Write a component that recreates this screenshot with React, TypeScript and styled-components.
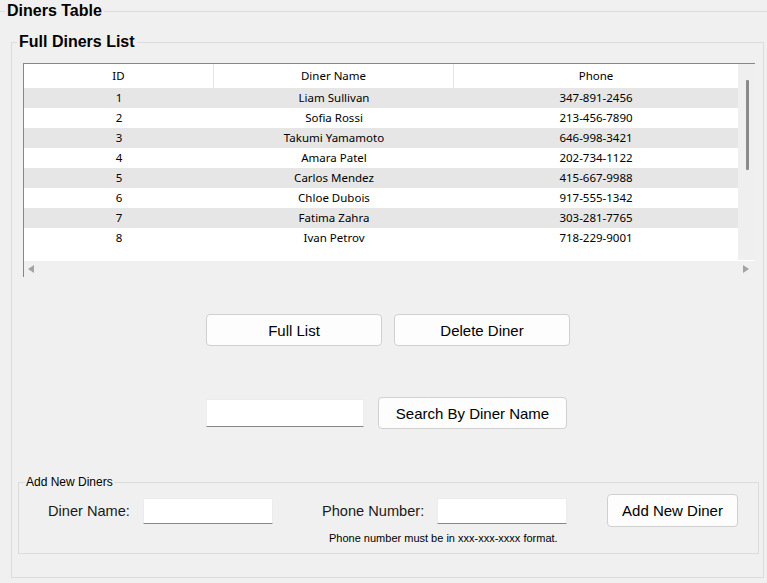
import React from "react";
import styled, { createGlobalStyle } from "styled-components";

const Global = createGlobalStyle`
  html, body { margin: 0; padding: 0; background: #f0f0f0; overflow: hidden; }
  body { font-family: "Liberation Sans", Arial, sans-serif; color: #000; }
  * { box-sizing: border-box; }
`;

const OuterGroup = styled.fieldset`
  margin: 2px 0 0 0;
  padding: 0 0 0 5px;
  border: none;
  border-top: 1px solid #dcdcdc;
  min-width: 0;
  width: 100%;
`;

const Title = styled.legend<{ $size: number; $bold?: boolean; $shift?: number }>`
  padding: 0 ${(p) => (p.$bold ? 2 : 1)}px;
  margin-left: ${(p) => p.$shift ?? 0}px;
  font-family: "Liberation Sans", Arial, sans-serif;
  font-size: ${(p) => p.$size}px;
  line-height: ${(p) => p.$size + 2}px;
  font-weight: ${(p) => (p.$bold ? 700 : 400)};
  color: #000;
`;

const ListGroup = styled.fieldset`
  margin: 13px 0 0 6px;
  padding: 12px 4px 23px 5px;
  border: 1px solid #dcdcdc;
  width: 753px;
  min-width: 0;
`;

const TableFrame = styled.div`
  margin-left: 6px;
  width: 732px;
  display: grid;
  grid-template-columns: 714px 17px;
  grid-template-rows: 196px 17px;
  border-top: 1px solid #828790;
  border-left: 1px solid #828790;
  background: #f0f0f0;
`;

const Viewport = styled.div`
  background: #ffffff;
  font-family: "Noto Sans", "Open Sans", sans-serif;
  font-size: 11.5px;
  color: #000;
`;

const HeaderRow = styled.div`
  display: grid;
  grid-template-columns: 190px 240px 284px;
  height: 24px;
`;

const HeaderCell = styled.div<{ $last?: boolean }>`
  display: flex;
  align-items: center;
  justify-content: center;
  padding-bottom: 2px;
  border-right: ${(p) => (p.$last ? "none" : "1px solid #e5e5e5")};
`;

const DataRow = styled.div<{ $shade: boolean }>`
  display: grid;
  grid-template-columns: 190px 240px 284px;
  height: 20px;
  background: ${(p) => (p.$shade ? "#e6e6e6" : "#ffffff")};
`;

const DataCell = styled.div`
  display: flex;
  align-items: center;
  justify-content: center;
  padding-bottom: 2px;
`;

const VScroll = styled.div`
  background: #efefef;
  display: flex;
  justify-content: flex-start;
  padding: 16px 0 0 8px;
`;

const VThumb = styled.div`
  width: 3px;
  height: 90px;
  background: #8a8a8a;
  border-radius: 1px;
`;

const HScroll = styled.div`
  grid-column: 1 / span 2;
  display: flex;
  align-items: center;
  justify-content: space-between;
  padding: 0 6px 0 4px;
  background: #f0f0f0;
  border-top: 1px solid #ffffff;
`;

const Arrow = styled.div<{ $dir: "left" | "right" }>`
  width: 0;
  height: 0;
  border-top: 4px solid transparent;
  border-bottom: 4px solid transparent;
  ${(p) =>
    p.$dir === "left"
      ? "border-right: 6px solid #a3a3a3;"
      : "border-left: 6px solid #a3a3a3;"}
`;

const ButtonRow = styled.div<{ $top: number; $gap: number; $shift?: number }>`
  display: flex;
  align-items: center;
  justify-content: center;
  gap: ${(p) => p.$gap}px;
  margin-top: ${(p) => p.$top}px;
  padding-right: ${(p) => p.$shift ?? 0}px;
`;

const Button = styled.button<{ $w: number; $h: number; $left?: number }>`
  width: ${(p) => p.$w}px;
  height: ${(p) => p.$h}px;
  margin: 0 0 0 ${(p) => p.$left ?? 0}px;
  background: #fdfdfd;
  border: 1px solid #d0d0d0;
  border-radius: 4px;
  font-family: "Liberation Sans", Arial, sans-serif;
  font-size: 15px;
  color: #000;
  padding: 0;
`;

const TextInput = styled.input<{ $w: number; $h: number }>`
  width: ${(p) => p.$w}px;
  height: ${(p) => p.$h}px;
  background: #ffffff;
  border: 1px solid #ececec;
  border-bottom: 1px solid #868686;
  border-radius: 1px;
  margin: 0;
  padding: 0 4px;
  font-family: "Liberation Sans", Arial, sans-serif;
  font-size: 14px;
  outline: none;
`;

const AddGroup = styled.fieldset`
  margin: 46px 0 0 1px;
  padding: 5px 0 8px 0;
  border: 1px solid #dcdcdc;
  width: 741px;
  min-width: 0;
`;

const FormRow = styled.div`
  display: flex;
  align-items: center;
  height: 33px;
  padding-left: 29px;
`;

const FieldLabel = styled.label<{ $w: number; $gap?: number }>`
  width: ${(p) => p.$w}px;
  margin-left: ${(p) => p.$gap ?? 0}px;
  font-size: 14.6px;
  color: #1a1a1a;
  white-space: nowrap;
`;

const Hint = styled.div`
  margin: 5px 0 0 310px;
  font-size: 11px;
  line-height: 13px;
  color: #000;
`;

const diners = [
  [1, "Liam Sullivan", "347-891-2456"],
  [2, "Sofia Rossi", "213-456-7890"],
  [3, "Takumi Yamamoto", "646-998-3421"],
  [4, "Amara Patel", "202-734-1122"],
  [5, "Carlos Mendez", "415-667-9988"],
  [6, "Chloe Dubois", "917-555-1342"],
  [7, "Fatima Zahra", "303-281-7765"],
  [8, "Ivan Petrov", "718-229-9001"],
] as const;

export default function App() {
  return (
    <>
      <Global />
      <OuterGroup>
        <Title $size={16} $bold>
          Diners Table
        </Title>
        <ListGroup>
          <Title $size={16} $bold>
            Full Diners List
          </Title>
          <TableFrame>
            <Viewport>
              <HeaderRow>
                <HeaderCell>ID</HeaderCell>
                <HeaderCell>Diner Name</HeaderCell>
                <HeaderCell $last>Phone</HeaderCell>
              </HeaderRow>
              {diners.map(([id, name, phone], i) => (
                <DataRow key={id} $shade={i % 2 === 0}>
                  <DataCell>{id}</DataCell>
                  <DataCell>{name}</DataCell>
                  <DataCell>{phone}</DataCell>
                </DataRow>
              ))}
            </Viewport>
            <VScroll>
              <VThumb />
            </VScroll>
            <HScroll>
              <Arrow $dir="left" />
              <Arrow $dir="right" />
            </HScroll>
          </TableFrame>

          <ButtonRow $top={37} $gap={12}>
            <Button $w={176} $h={32}>Full List</Button>
            <Button $w={176} $h={32}>Delete Diner</Button>
          </ButtonRow>

          <ButtonRow $top={51} $gap={14} $shift={3}>
            <TextInput $w={158} $h={28} />
            <Button $w={189} $h={32}>Search By Diner Name</Button>
          </ButtonRow>

          <AddGroup>
            <Title $size={12} $shift={6}>
              Add New Diners
            </Title>
            <FormRow>
              <FieldLabel $w={95}>Diner Name:</FieldLabel>
              <TextInput $w={130} $h={26} />
              <FieldLabel $w={115} $gap={49}>
                Phone Number:
              </FieldLabel>
              <TextInput $w={130} $h={26} />
              <Button $w={131} $h={33} $left={40}>
                Add New Diner
              </Button>
            </FormRow>
            <Hint>Phone number must be in xxx-xxx-xxxx format.</Hint>
          </AddGroup>
        </ListGroup>
      </OuterGroup>
    </>
  );
}
